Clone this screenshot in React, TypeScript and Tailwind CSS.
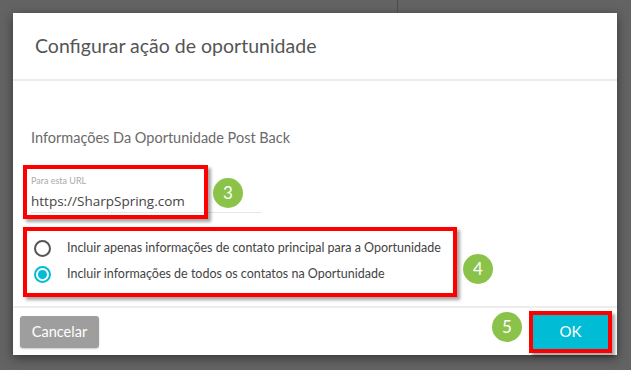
import React from 'react';

const lato = { fontFamily: 'Lato, "Liberation Sans", sans-serif' };

const Badge = ({ n, className }: { n: number; className: string }) => (
  <div
    className={`absolute flex h-[30px] w-[30px] items-center justify-center rounded-full bg-[#8bc34a] text-[17px] text-white ${className}`}
    style={lato}
  >
    {n}
  </div>
);

const App: React.FC = () => {
  return (
    <div className="relative h-[370px] w-[631px] overflow-hidden bg-[#636363] pl-[13px] pt-[13px]" style={lato}>
      {/* line of the page behind the overlay */}
      <div className="absolute left-[397px] top-0 h-[13px] w-px bg-[#4a4a4a]" />

      <div className="flex h-[342px] w-[604px] flex-col bg-white shadow-[0_3px_10px_rgba(0,0,0,0.45)]">
        <div className="flex h-[68px] shrink-0 items-center border-b-2 border-[#ececec] pl-[22px]">
          <h2 className="text-[19.5px] text-[#555]">Configurar ação de oportunidade</h2>
        </div>

        <div className="flex-1 pl-[18px] pt-[48px]">
          <p className="text-[14.5px] leading-[17px] text-[#6a6a6a]">Informações Da Oportunidade Post Back</p>

          <div className="mt-[29px] w-[231px] border-b border-[#e6e6e6] pb-[2px]">
            <div className="text-[9px] leading-[11px] text-[#aaa]">Para esta URL</div>
            <div
              className="mt-[6px] text-[13.5px] leading-[18px] text-[#444]"
              style={{ fontFamily: '"Open Sans", "Noto Sans", sans-serif' }}
            >
              https://SharpSpring.com
            </div>
          </div>

          <div className="mt-[26px] flex flex-col gap-[8px] pl-[3px]">
            <label className="flex items-center gap-[16px]">
              <span className="h-[17px] w-[17px] rounded-full border-2 border-[#555]" />
              <span className="text-[12.5px] leading-[18px] text-[#444]">
                Incluir apenas informações de contato principal para a Oportunidade
              </span>
            </label>
            <label className="flex items-center gap-[16px]">
              <span className="flex h-[17px] w-[17px] items-center justify-center rounded-full border-2 border-[#00bcd4]">
                <span className="h-[9px] w-[9px] rounded-full bg-[#00bcd4]" />
              </span>
              <span className="text-[12.5px] leading-[18px] text-[#444]">
                Incluir informações de todos os contatos na Oportunidade
              </span>
            </label>
          </div>
        </div>

        <div className="flex h-[49px] shrink-0 items-center justify-between border-t-2 border-[#ededed] pl-[7px] pr-[8px]">
          <button
            type="button"
            className="h-[32px] w-[79px] rounded-[3px] bg-[#9e9e9e] text-[14.5px] text-white shadow-[0_1px_2px_rgba(0,0,0,0.2)]"
          >
            Cancelar
          </button>
          <button
            type="button"
            className="h-[35px] w-[77px] bg-[#00bcd4] text-[15px] text-white"
          >
            OK
          </button>
        </div>
      </div>

      {/* annotations */}
      <div className="absolute left-[23px] top-[165px] h-[54px] w-[185px] border-[4px] border-[#ff0000] shadow-[3px_3px_3px_rgba(0,0,0,0.35)]" />
      <div className="absolute left-[23px] top-[227px] h-[70px] w-[434px] border-[4px] border-[#ff0000] shadow-[3px_3px_3px_rgba(0,0,0,0.35)]" />
      <div className="absolute left-[529px] top-[311px] h-[42px] w-[83px] border-[4px] border-[#ff0000] shadow-[3px_3px_3px_rgba(0,0,0,0.35)]" />
      <Badge n={3} className="left-[213px] top-[178px]" />
      <Badge n={4} className="left-[463px] top-[254px]" />
      <Badge n={5} className="left-[492px] top-[312px]" />
    </div>
  );
};

export default App;
